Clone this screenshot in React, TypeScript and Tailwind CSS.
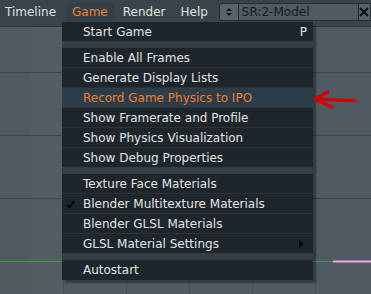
import React from "react";

const font = { fontFamily: '"DejaVu Sans", "Liberation Sans", sans-serif' };

function Row({
  label,
  active,
  check,
  shortcut,
  submenu,
}: {
  label: string;
  active?: boolean;
  check?: boolean;
  shortcut?: string;
  submenu?: boolean;
}) {
  return (
    <div
      className={`relative flex h-[19px] items-center pl-[21px] pr-[4px] text-[12px] ${
        active ? "bg-[#2c3d49] text-[#ec7f2e]" : "bg-[#1e262b] text-[#e2e4e5]"
      }`}
    >
      {check && (
        <svg className="absolute left-[4px] top-[6px]" width="10" height="9" viewBox="0 0 10 9">
          <path d="M1 5 L3.5 7.5 L8.5 1" fill="none" stroke="#060606" strokeWidth="1.8" />
        </svg>
      )}
      <span className="flex-1 whitespace-nowrap">{label}</span>
      {shortcut && <span className="mr-[2px] text-[12px] text-[#e2e4e5]">{shortcut}</span>}
      {submenu && (
        <svg className="mr-[5px]" width="5" height="8" viewBox="0 0 5 8">
          <path d="M0 0 L5 4 L0 8 Z" fill="#050505" />
        </svg>
      )}
    </div>
  );
}

function Sep() {
  return <div className="h-[7px] bg-[#343e44]" />;
}

export default function App() {
  return (
    <div
      className="relative flex h-[294px] w-[371px] flex-col overflow-hidden bg-[#4f5a62]"
      style={font}
    >
      {/* header */}
      <div className="flex h-[27px] shrink-0 items-start border-b border-[#2f363b] bg-[#3a434a] pt-[3px] text-[12px] text-[#dfe1e2]">
        <div className="ml-[5px] flex h-[18px] items-center">Timeline</div>
        <div className="ml-[10px] flex h-[18px] items-center rounded-t-[3px] bg-[#333f48] px-[6px] text-[#ee832f]">
          Game
        </div>
        <div className="ml-[9px] flex h-[18px] items-center">Render</div>
        <div className="ml-[15px] flex h-[18px] items-center">Help</div>
        <div className="ml-[11px] flex h-[18px] w-[20px] items-center justify-center rounded-l-[3px] border border-[#262d32] bg-[#57626a]">
          <svg width="8" height="10" viewBox="0 0 8 10">
            <path d="M1 4 L4 1 L7 4 Z" fill="#15191c" />
            <path d="M1 6 L4 9 L7 6 Z" fill="#15191c" />
          </svg>
        </div>
        <div className="flex h-[18px] w-[119px] items-center border-y border-[#262d32] bg-[#4f5a61] pl-[3px] text-[#14191c]">
          SR:2-Model
        </div>
        <div className="flex h-[18px] flex-1 items-center justify-center border border-[#262d32] bg-[#56616a]">
          <svg width="10" height="10" viewBox="0 0 10 10">
            <path d="M1 1 L9 9 M9 1 L1 9" stroke="#0f1315" strokeWidth="2.2" />
          </svg>
        </div>
      </div>

      {/* canvas */}
      <div className="relative flex-1">
        <svg className="absolute inset-0" width="371" height="267" viewBox="0 27 371 267">
          <rect x="31" y="27" width="32" height="267" fill="#525d65" />
          {[72, 135, 198].map((y) => (
            <line key={y} x1="0" x2="371" y1={y + 0.5} y2={y + 0.5} stroke="#3d444b" strokeWidth="1" />
          ))}
          {[63, 126, 189, 252, 315].map((x) => (
            <line key={x} x1={x + 0.5} x2={x + 0.5} y1="27" y2="294" stroke="#47515a" strokeWidth="1" />
          ))}
          <line x1="0" x2="333" y1="261.5" y2="261.5" stroke="#2ea02e" strokeWidth="1" />
          <line x1="333" x2="371" y1="261.5" y2="261.5" stroke="#f0a6ee" strokeWidth="2" />
        </svg>
      </div>

      {/* dropdown menu */}
      <div className="absolute left-[62px] top-[22px] w-[251px] bg-[#1e262b] pb-[1px] shadow-[3px_3px_2px_rgba(0,0,0,0.35)]">
        <Row label="Start Game" shortcut="P" />
        <Sep />
        <div className="flex flex-col gap-px bg-[#2b343a]">
          <Row label="Enable All Frames" />
          <Row label="Generate Display Lists" />
          <Row label="Record Game Physics to IPO" active />
          <Row label="Show Framerate and Profile" />
          <Row label="Show Physics Visualization" />
          <Row label="Show Debug Properties" />
        </div>
        <Sep />
        <div className="flex flex-col gap-px bg-[#2b343a]">
          <Row label="Texture Face Materials" />
          <Row label="Blender Multitexture Materials" check />
          <Row label="Blender GLSL Materials" />
          <Row label="GLSL Material Settings" submenu />
        </div>
        <Sep />
        <Row label="Autostart" />
      </div>

      {/* red annotation arrow */}
      <svg className="absolute left-[310px] top-[86px]" width="50" height="26" viewBox="310 86 50 26">
        <path
          d="M315 99 C 325 99, 340 100.5, 355 100.5"
          fill="none"
          stroke="#d10000"
          strokeWidth="3.2"
          strokeLinecap="round"
        />
        <path
          d="M328 92 L315 99 L332 107"
          fill="none"
          stroke="#d10000"
          strokeWidth="3.2"
          strokeLinecap="round"
          strokeLinejoin="round"
        />
      </svg>
    </div>
  );
}
